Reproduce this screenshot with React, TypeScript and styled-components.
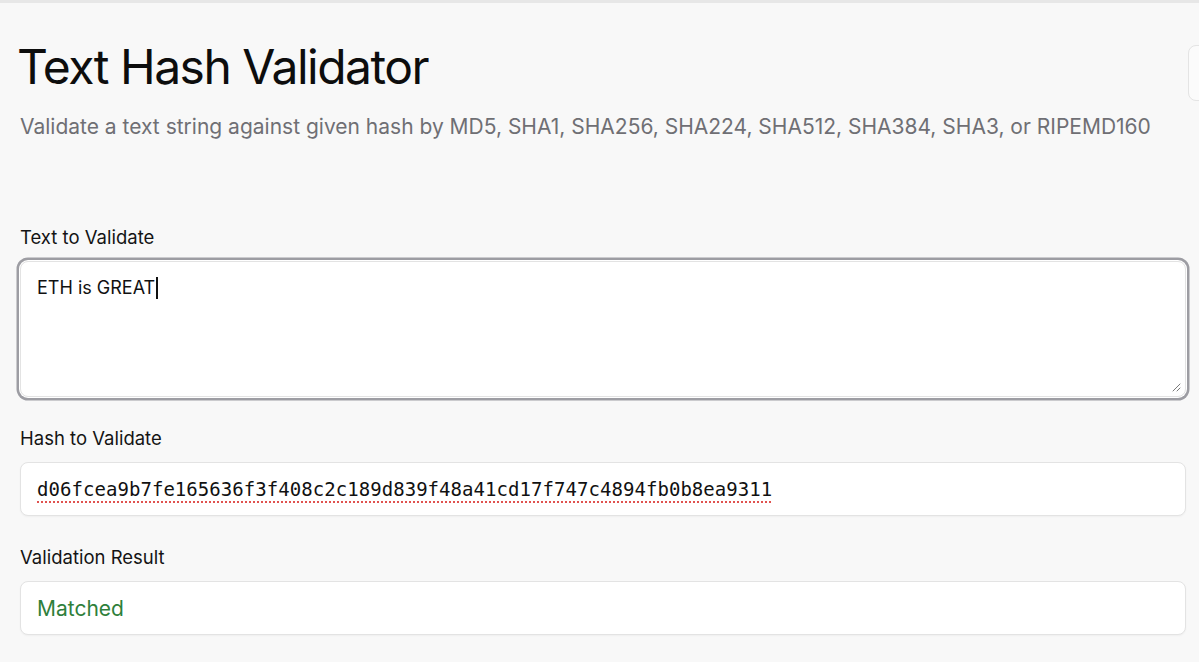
import styled, { createGlobalStyle } from "styled-components";

const GlobalStyle = createGlobalStyle`
    html, body {
        margin: 0;
        padding: 0;
        background: #f8f8f8;
        overflow: hidden;
    }

    body {
        font-family: Inter, "Noto Sans", sans-serif;
        color: #161616;
    }
`;

const Page = styled.div`
    min-height: 662px;
    border-top: 3px solid #e7e7e7;
    box-sizing: border-box;
    padding: 0 13px 0 20px;
`;

const Header = styled.header`
    display: flex;
    align-items: flex-start;
    justify-content: space-between;
    padding-top: 35px;
`;

const HeaderText = styled.div`
    display: flex;
    flex-direction: column;
`;

const Title = styled.h1`
    margin: 0 0 0 -3px;
    font-size: 48px;
    font-weight: 400;
    line-height: 58px;
    letter-spacing: -1.5px;
    color: #0d0d0d;
`;

const Subtitle = styled.p`
    margin: 19px 0 0;
    font-size: 21px;
    line-height: 24px;
    color: #6f6f74;
`;

const MenuButton = styled.div`
    width: 60px;
    height: 54px;
    margin-top: 7px;
    margin-right: -64px;
    border: 1px solid #e4e4e4;
    border-radius: 8px;
    background: #fbfbfb;
`;

const Form = styled.form`
    display: flex;
    flex-direction: column;
    margin-top: 87px;
`;

const Field = styled.div`
    display: flex;
    flex-direction: column;
    gap: 13px;
    margin-bottom: 29px;

    & + & {
        margin-top: 1px;
    }
`;

const Label = styled.label`
    font-size: 18.5px;
    line-height: 22px;
    color: #141414;
`;

const Box = styled.div<{ $tall?: boolean; $focused?: boolean }>`
    position: relative;
    box-sizing: border-box;
    height: ${(p) => (p.$tall ? "136px" : "54px")};
    padding: ${(p) => (p.$tall ? "15px" : "0")} 16px;
    display: flex;
    align-items: ${(p) => (p.$tall ? "flex-start" : "center")};
    background: #ffffff;
    border: 1px solid #e3e3e3;
    border-radius: 8px;
    box-shadow: ${(p) =>
        p.$focused
            ? "0 0 0 1px #ffffff, 0 0 0 3.5px #9d9da3"
            : "0 1px 2px rgba(0, 0, 0, 0.04)"};
`;

const PlainText = styled.span`
    font-size: 18px;
    line-height: 22px;
    color: #111111;
`;

const Caret = styled.span`
    display: inline-block;
    width: 1.5px;
    height: 22px;
    margin-left: 1px;
    vertical-align: top;
    background: #111111;
`;

const HashText = styled.span`
    font-family: "DejaVu Sans Mono", "Liberation Mono", monospace;
    font-size: 19px;
    letter-spacing: 0.05px;
    color: #111111;
    text-decoration: underline dotted #e0524f;
    text-underline-offset: 5px;
    text-decoration-thickness: 1.5px;
`;

const ResultText = styled.span<{ $ok: boolean }>`
    font-size: 21px;
    color: ${(p) => (p.$ok ? "#2f7f3b" : "#c0392b")};
`;

const Grip = styled.svg`
    position: absolute;
    right: 4px;
    bottom: 4px;
`;

export default function App() {
    return (
        <>
            <GlobalStyle />
            <Page>
                <Header>
                    <HeaderText>
                        <Title>Text Hash Validator</Title>
                        <Subtitle>
                            Validate a text string against given hash by MD5,
                            SHA1, SHA256, SHA224, SHA512, SHA384, SHA3, or
                            RIPEMD160
                        </Subtitle>
                    </HeaderText>
                    <MenuButton />
                </Header>
                <Form>
                    <Field>
                        <Label>Text to Validate</Label>
                        <Box $tall $focused>
                            <PlainText>
                                ETH is GREAT
                                <Caret />
                            </PlainText>
                            <Grip width="10" height="10" viewBox="0 0 10 10">
                                <path
                                    d="M9 2 L2 9 M9 6 L6 9"
                                    stroke="#7a7a7a"
                                    strokeWidth="1"
                                    strokeLinecap="round"
                                />
                            </Grip>
                        </Box>
                    </Field>
                    <Field>
                        <Label>Hash to Validate</Label>
                        <Box>
                            <HashText>
                                d06fcea9b7fe165636f3f408c2c189d839f48a41cd17f747c4894fb0b8ea9311
                            </HashText>
                        </Box>
                    </Field>
                    <Field>
                        <Label>Validation Result</Label>
                        <Box>
                            <ResultText $ok>Matched</ResultText>
                        </Box>
                    </Field>
                </Form>
            </Page>
        </>
    );
}
